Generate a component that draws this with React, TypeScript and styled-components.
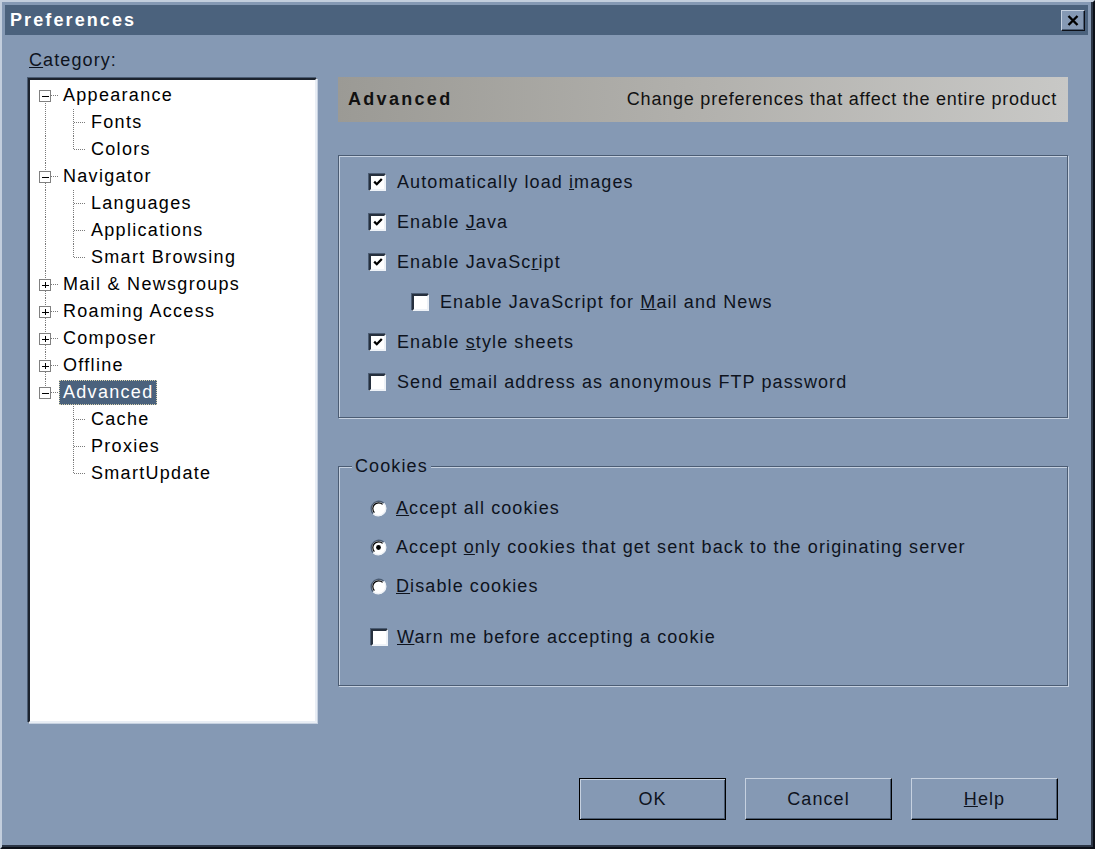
import styled, {createGlobalStyle} from "styled-components";

const FACE = "#8599b4";
const DARK = "#4b5c73";
const LIGHT = "#c6d1e0";
const INK = "#0e131d";

const GlobalStyle = createGlobalStyle`
  html, body {
    margin: 0;
    padding: 0;
    background: #0c1018;
  }

  body {
    font-family: "Liberation Sans", Arial, sans-serif;
  }

  * {
    box-sizing: border-box;
  }
`;

type TreeNode = {
    label: string
    level: 0 | 1
    root: "down" | "up" | "full" | "none"
    expander?: "open" | "closed"
    last?: boolean
    selected?: boolean
}

const tree: TreeNode[] = [
    {label: "Appearance", level: 0, root: "down", expander: "open"},
    {label: "Fonts", level: 1, root: "full"},
    {label: "Colors", level: 1, root: "full", last: true},
    {label: "Navigator", level: 0, root: "full", expander: "open"},
    {label: "Languages", level: 1, root: "full"},
    {label: "Applications", level: 1, root: "full"},
    {label: "Smart Browsing", level: 1, root: "full", last: true},
    {label: "Mail & Newsgroups", level: 0, root: "full", expander: "closed"},
    {label: "Roaming Access", level: 0, root: "full", expander: "closed"},
    {label: "Composer", level: 0, root: "full", expander: "closed"},
    {label: "Offline", level: 0, root: "full", expander: "closed"},
    {label: "Advanced", level: 0, root: "up", expander: "open", selected: true},
    {label: "Cache", level: 1, root: "none"},
    {label: "Proxies", level: 1, root: "none"},
    {label: "SmartUpdate", level: 1, root: "none", last: true},
]

const DOT = {stroke: "#7a7a7a", strokeWidth: 1, strokeDasharray: "1 1", fill: "none"}

// connector lines + expander box drawn left of each tree label
const Gutter = ({node}: { node: TreeNode }) => {
    const w = node.level === 0 ? 29 : 57
    const rootSeg = {down: [13, 27], up: [0, 13], full: [0, 27], none: null}[node.root]
    return (
        <svg width={w} height={27} viewBox={`0 0 ${w} 27`} shapeRendering="crispEdges" style={{flex: "none"}}>
            {rootSeg && <line x1={15.5} y1={rootSeg[0]} x2={15.5} y2={rootSeg[1]} {...DOT}/>}
            {node.level === 0 && (
                <>
                    <line x1={21} y1={13.5} x2={29} y2={13.5} {...DOT}/>
                    <rect x={9.5} y={8.5} width={11} height={11} fill="#fff" stroke="#808080"/>
                    <line x1={12} y1={14} x2={19} y2={14} stroke="#000"/>
                    {node.expander === "closed" && <line x1={15.5} y1={11} x2={15.5} y2={17} stroke="#000"/>}
                </>
            )}
            {node.level === 1 && (
                <>
                    <line x1={43.5} y1={0} x2={43.5} y2={node.last ? 13.5 : 27} {...DOT}/>
                    <line x1={44} y1={13.5} x2={56} y2={13.5} {...DOT}/>
                </>
            )}
        </svg>
    )
}

const Check = () => (
    <svg width={10} height={10} viewBox="0 0 10 10">
        <path d="M1.2 4.6 L3.8 7.2 L8.8 2" stroke="#000" strokeWidth={2.3} fill="none"/>
    </svg>
)

const Radio = ({on}: { on?: boolean }) => (
    <svg width={17} height={17} viewBox="0 0 17 17" style={{flex: "none"}}>
        <circle cx={8.5} cy={8.5} r={7.5} fill="#fff"/>
        <path d="M3.2 13.8 A7.5 7.5 0 0 1 13.8 3.2" stroke={DARK} strokeWidth={1.4} fill="none"/>
        <path d="M13.8 3.2 A7.5 7.5 0 0 1 3.2 13.8" stroke="#eef2f7" strokeWidth={1.4} fill="none"/>
        <path d="M4.4 12.6 A5.8 5.8 0 0 1 12.6 4.4" stroke="#000" strokeWidth={1.2} fill="none"/>
        {on && <circle cx={8.5} cy={8.5} r={2.4} fill="#000"/>}
    </svg>
)

export default function App() {
    return <>
        <GlobalStyle/>
        <Window>
            <TitleBar>
                <Title>Preferences</Title>
                <CloseButton aria-label="Close">
                    <svg width={12} height={11} viewBox="0 0 12 11">
                        <path d="M1.5 1 L10.5 10 M10.5 1 L1.5 10" stroke="#000" strokeWidth={2.4}/>
                    </svg>
                </CloseButton>
            </TitleBar>

            <Body>
                <LeftCol>
                    <Label><u>C</u>ategory:</Label>
                    <Tree>
                        {tree.map(node => (
                            <TreeRow key={node.label}>
                                <Gutter node={node}/>
                                <TreeLabel $selected={node.selected}>{node.label}</TreeLabel>
                            </TreeRow>
                        ))}
                    </Tree>
                </LeftCol>

                <RightCol>
                    <Header>
                        <HeaderTitle>Advanced</HeaderTitle>
                        <HeaderText>Change preferences that affect the entire product</HeaderText>
                    </Header>

                    <Group $height={263}>
                        <OptionList>
                            <Option>
                                <CheckBox><Check/></CheckBox>
                                <span>Automatically load <u>i</u>mages</span>
                            </Option>
                            <Option>
                                <CheckBox><Check/></CheckBox>
                                <span>Enable <u>J</u>ava</span>
                            </Option>
                            <Option>
                                <CheckBox><Check/></CheckBox>
                                <span>Enable JavaSc<u>r</u>ipt</span>
                            </Option>
                            <Option $indent={43}>
                                <CheckBox/>
                                <span>Enable JavaScript for <u>M</u>ail and News</span>
                            </Option>
                            <Option>
                                <CheckBox><Check/></CheckBox>
                                <span>Enable <u>s</u>tyle sheets</span>
                            </Option>
                            <Option>
                                <CheckBox/>
                                <span>Send <u>e</u>mail address as anonymous FTP password</span>
                            </Option>
                        </OptionList>
                    </Group>

                    <Group $height={220} $gap={48}>
                        <Legend>Cookies</Legend>
                        <RadioList>
                            <CookieRow>
                                <Radio/>
                                <span><u>A</u>ccept all cookies</span>
                            </CookieRow>
                            <CookieRow>
                                <Radio on/>
                                <span>Accept <u>o</u>nly cookies that get sent back to the originating server</span>
                            </CookieRow>
                            <CookieRow>
                                <Radio/>
                                <span><u>D</u>isable cookies</span>
                            </CookieRow>
                            <CookieRow $spaced>
                                <CheckBox/>
                                <span><u>W</u>arn me before accepting a cookie</span>
                            </CookieRow>
                        </RadioList>
                    </Group>
                </RightCol>
            </Body>

            <Footer>
                <Button $default>OK</Button>
                <Button>Cancel</Button>
                <Button><u>H</u>elp</Button>
            </Footer>
        </Window>
    </>
}

const Window = styled.div`
  width: 1095px;
  height: 849px;
  background: ${FACE};
  border: 2px solid;
  border-color: #c3cedd #0c1018 #0c1018 #c3cedd;
  box-shadow: inset 0 -2px 0 #2c3646, inset -2px 0 0 #2c3646;
  padding: 3px 5px 3px 3px;
  display: flex;
  flex-direction: column;
  color: ${INK};
  font-size: 18px;
  letter-spacing: 1.1px;
`;

const TitleBar = styled.div`
  height: 30px;
  flex: none;
  background: #4b627d;
  display: flex;
  align-items: center;
  justify-content: space-between;
  padding: 0 3px 0 5px;
`;

const Title = styled.span`
  font-weight: 700;
  font-size: 18px;
  letter-spacing: 2.1px;
  color: #fff;
`;

const CloseButton = styled.button`
  width: 24px;
  height: 21px;
  padding: 0;
  background: ${FACE};
  border: 1px solid;
  border-color: ${LIGHT} #0c1018 #0c1018 ${LIGHT};
  box-shadow: inset -1px -1px 0 ${DARK};
  display: flex;
  align-items: center;
  justify-content: center;
`;

const Body = styled.div`
  height: 688px;
  flex: none;
  display: flex;
  gap: 21px;
  padding-left: 23px;
`;

const LeftCol = styled.div`
  width: 289px;
  display: flex;
  flex-direction: column;
`;

const Label = styled.div`
  margin: 14px 0 7px 1px;
  height: 22px;
  line-height: 22px;
`;

const Tree = styled.div`
  flex: 1;
  background: #fff;
  border: 2px solid;
  border-color: #1c232e #e9eef5 #e9eef5 #1c232e;
  box-shadow: -1px -1px 0 ${DARK}, 1px 1px 0 ${LIGHT};
  padding-top: 2px;
  color: #000;
`;

const TreeRow = styled.div`
  height: 27px;
  display: flex;
  align-items: center;
`;

const TreeLabel = styled.span<{ $selected?: boolean }>`
  height: 25px;
  line-height: 25px;
  padding: 0 4px;
  white-space: nowrap;
  letter-spacing: 1.3px;
  background: ${p => p.$selected ? "#4b627d" : "transparent"};
  color: ${p => p.$selected ? "#fff" : "#000"};
  outline: ${p => p.$selected ? "1px dotted #d9d2ae" : "none"};
  outline-offset: -1px;
`;

const RightCol = styled.div`
  width: 730px;
  padding-top: 42px;
`;

const Header = styled.div`
  height: 45px;
  display: flex;
  align-items: center;
  justify-content: space-between;
  padding: 0 11px 0 10px;
  background: linear-gradient(90deg, #9b9a95 0%, #b2b1ad 50%, #c8c8c6 100%);
  color: #111;
`;

const HeaderTitle = styled.span`
  font-weight: 700;
  letter-spacing: 2.3px;
`;

const HeaderText = styled.span`
  letter-spacing: 0.78px;
`;

const Group = styled.div<{ $height: number, $gap?: number }>`
  height: ${p => p.$height}px;
  margin-top: ${p => p.$gap ?? 33}px;
  border: 1px solid ${DARK};
  box-shadow: inset 1px 1px 0 ${LIGHT}, 1px 1px 0 ${LIGHT};
`;

const OptionList = styled.div`
  padding: 6px 0 0 30px;
`;

const Option = styled.label<{ $indent?: number }>`
  height: 40px;
  display: flex;
  align-items: center;
  gap: 11px;
  padding-left: ${p => p.$indent ?? 0}px;
`;

const CheckBox = styled.span`
  width: 17px;
  height: 17px;
  flex: none;
  background: #fff;
  border: 2px solid;
  border-color: #26303e #eef2f7 #eef2f7 #26303e;
  box-shadow: -1px -1px 0 ${DARK};
  display: inline-flex;
  align-items: center;
  justify-content: center;
`;

const Legend = styled.div`
  width: fit-content;
  margin: -12px 0 0 13px;
  padding: 0 3px;
  height: 22px;
  line-height: 22px;
  background: ${FACE};
`;

const RadioList = styled.div`
  padding: 12px 0 0 31px;
`;

const CookieRow = styled.label<{ $spaced?: boolean }>`
  height: 39px;
  display: flex;
  align-items: center;
  gap: 9px;
  margin-top: ${p => p.$spaced ? 12 : 0}px;
  padding-left: ${p => p.$spaced ? 1 : 0}px;
`;

const Footer = styled.div`
  display: flex;
  justify-content: flex-end;
  gap: 19px;
  margin-top: 55px;
  padding-right: 30px;
`;

const Button = styled.button<{ $default?: boolean }>`
  width: 147px;
  height: 42px;
  padding: 0;
  background: ${FACE};
  font-family: "Liberation Sans", Arial, sans-serif;
  font-size: 18px;
  letter-spacing: 1.1px;
  color: ${INK};
  border: 1px solid;
  border-color: ${p => p.$default ? "#000" : LIGHT} #000 #000 ${p => p.$default ? "#000" : LIGHT};
  box-shadow: ${p => p.$default
          ? `inset 1px 1px 0 ${LIGHT}, inset -1px -1px 0 ${DARK}`
          : `inset -1px -1px 0 ${DARK}`};
`;
